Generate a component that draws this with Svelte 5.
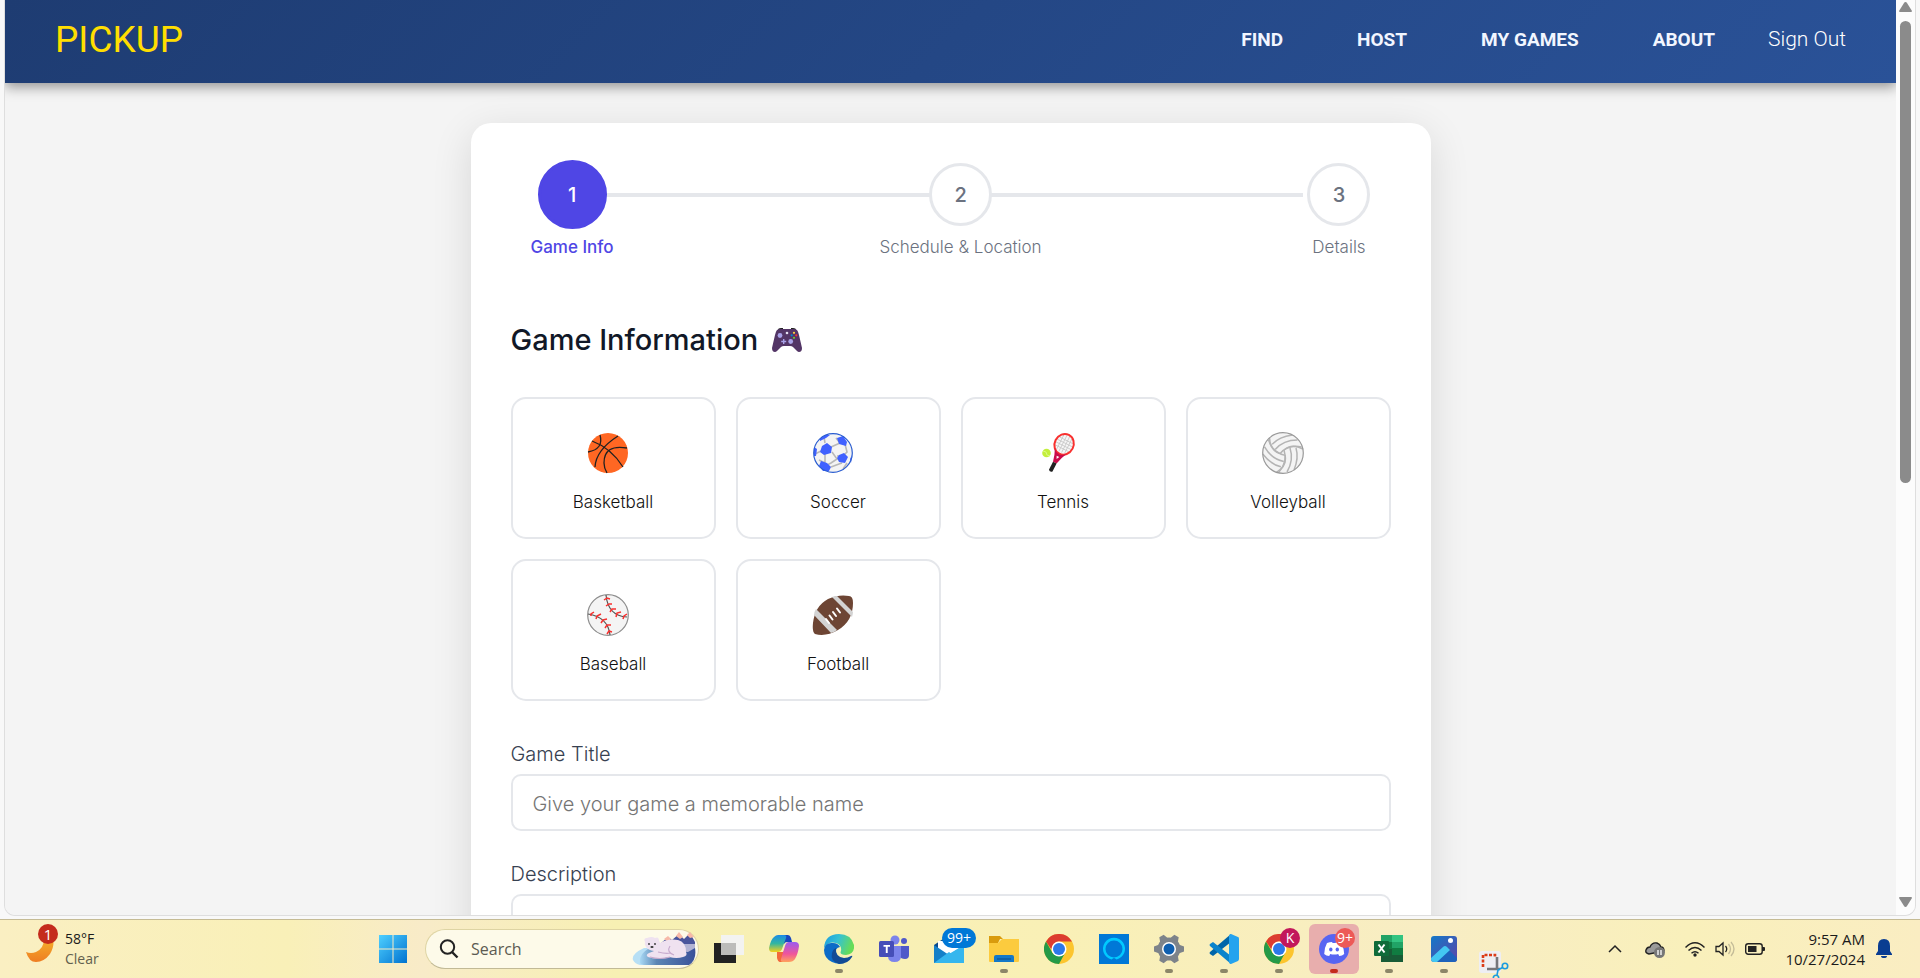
<script>
  const nav = ['FIND', 'HOST', 'MY GAMES', 'ABOUT'];
  const steps = [
    { n: 1, label: 'Game Info', active: true },
    { n: 2, label: 'Schedule & Location', active: false },
    { n: 3, label: 'Details', active: false }
  ];
  const sports = ['Basketball', 'Soccer', 'Tennis', 'Volleyball', 'Baseball', 'Football'];
  const apps = [
    { id: 'taskview', label: 'Task view' },
    { id: 'copilot', label: 'Copilot' },
    { id: 'edge', label: 'Edge', open: true },
    { id: 'teams', label: 'Teams' },
    { id: 'mail', label: 'Mail', badge: '99+' },
    { id: 'files', label: 'File Explorer', open: true },
    { id: 'chrome', label: 'Chrome' },
    { id: 'alexa', label: 'Alexa' },
    { id: 'settings', label: 'Settings', open: true },
    { id: 'code', label: 'Code', open: true },
    { id: 'chrome', label: 'Chrome profile', open: true, badge: 'K' },
    { id: 'discord', label: 'Discord', open: true, badge: '9+' },
    { id: 'excel', label: 'Excel', open: true },
    { id: 'photos', label: 'Photos', open: true },
    { id: 'snip', label: 'Snipping Tool' }
  ];
  let selected = $state('');
  let title = $state('');
</script>

<div class="desktop">
  <div class="window">
    <div class="page">
      <header>
        <a class="logo" href="#home">PICKUP</a>
        <nav>
          {#each nav as item}
            <a href="#{item}">{item}</a>
          {/each}
          <button class="signout">Sign Out</button>
        </nav>
      </header>
      <main>
        <form class="card">
          <ol class="steps">
            {#each steps as s}
              <li class:active={s.active}>
                <span class="circle">{s.n}</span>
                <span class="step-label">{s.label}</span>
              </li>
            {/each}
          </ol>

          <h2>
            Game Information
            <svg class="pad" viewBox="0 0 30 24" aria-hidden="true">
              <path d="M6 2q0-2 3-2h2v3H6zM19 0h2q3 0 3 2v1h-5z" fill="#222" />
              <path d="M5 2Q6 1 9 1h12q3 0 4 1 1 1 2 5l3 13q0 4-3 4-1 0-2-1l-4-4q-1-1-3-1h-6q-2 0-3 1l-4 4q-1 1-2 1-3 0-3-4L3 7q1-4 2-5z" fill="#533566" />
              <circle cx="8" cy="7.5" r="2.4" fill="#a9a2e8" />
              <circle cx="18.7" cy="13.5" r="2.4" fill="#a9a2e8" />
              <path d="M11 11h1.4v1.8h1.8v1.4h-1.8V16H11v-1.8H9.200v-1.400H11z" fill="#a9a2e8" />
              <circle cx="15" cy="5" r="1.300" fill="#e6e1f2" />
              <circle cx="22" cy="4.800" r="1.100" fill="#fcd53f" />
              <circle cx="19.700" cy="7.300" r="1.100" fill="#0084ce" />
              <circle cx="24.300" cy="7.300" r="1.100" fill="#f8312f" />
              <circle cx="22" cy="9.800" r="1.100" fill="#6fc332" />
            </svg>
          </h2>

          <div class="sports">
            {#each sports as sport}
              <button type="button" class:chosen={selected === sport} onclick={() => (selected = sport)}>
                <svg viewBox="-21 -21 42 42" aria-hidden="true">
                  {#if sport === 'Basketball'}
                    <circle r="20" fill="#ff6723" />
                    <g fill="none" stroke="#212121" stroke-width="1.300">
                      <path d="M-16-12Q3-5 15 14M-8-18Q-4-4-20-1M10-17Q-12-3-13 14M19-5Q-4-9-4 10-4 15-1 20" />
                    </g>
                  {:else if sport === 'Soccer'}
                    <circle r="19.300" fill="#f4f4f4" />
                    <g fill="none" stroke="#b8b8b8" stroke-width="1.600">
                      <path d="M-8-10l-1-6M-2-6l9-4 5-1M-12-2l-6 3M-8 1v9l-6-3M-1-1l5 7-6 4-6 3M7 3h-3M7-10l-4-5M12-9l2 8-3 3M-2 14l8-3 3-1M14 10l-4 6" />
                    </g>
                    <g fill="#4061ff">
                      <path d="M-11-7l5-3 5 4-1 6-7 2-4-3zM4-15l6-2 4 6-1 4-7-2zM6 2l5-2 4 4-3 6-6-1-2-4zM-12 8l6 2 4 4-2 4-6 0-4-5zM-13-14l5-4h5l-4 3-6 3zM17 6l2-4-1 8zM-19-6l3 2-1 7-2 0z" />
                    </g>
                    <circle r="19.300" fill="none" stroke="#2a5dd0" stroke-width="1.200" />
                  {:else if sport === 'Tennis'}
                    <g transform="rotate(27)">
                      <ellipse cx="1.500" cy="-11" rx="9" ry="10" fill="#f6f6f6" />
                      <path d="M-3-19v16M0-20V-2M3-20V-2M6-19v16M-6-15H9M-7-12H10M-7-9H10M-6-6H9" stroke="#c8c8c8" stroke-width=".8" fill="none" />
                      <ellipse cx="1.500" cy="-10.500" rx="9.500" ry="10.500" fill="none" stroke="#f8312f" stroke-width="2" />
                      <path d="M-5-3Q-2 3-.5 10h4Q5 3 8-3L6-1Q1.500 2-3-1zM0 3l3 0-1.500 3z" fill="#ca0b4a" fill-rule="evenodd" />
                      <path d="M-.5 10h4v9q-2 2-4 0z" fill="#212121" />
                    </g>
                    <circle cx="-11.500" cy="0" r="4.300" fill="#c3ef3c" />
                    <path d="M-15-2l3 1 1 3 3 1" fill="none" stroke="#dafa82" />
                  {:else if sport === 'Volleyball'}
                    <circle r="20.300" fill="#f4f4f4" />
                    <g fill="none" stroke="#b4b4b4" stroke-width="1.500">
                      {#each [0, 120, 240] as turn}
                        <path transform="rotate({turn})" d="M1-3Q5 9-4 19M7-5Q11 7 4 19M13-5Q16 5 11 17M1-3Q9-10 20-4" />
                      {/each}
                    </g>
                    <circle r="20.300" fill="none" stroke="#999" stroke-width="1.200" />
                  {:else if sport === 'Baseball'}
                    <circle r="20.300" fill="#f4f4f4" stroke="#8d8d8d" stroke-width="1.200" />
                    <path d="M-2-20Q0 1 19 2M-20-1Q0 2 2 20" fill="none" stroke="#555" stroke-width="1.200" />
                    <path d="M-4-15l3-2 3 1M-2-9l3-2 3 0M2-3l2-3 4 0M8 2l1-4 4-1M15 4l1-3 3-2M-17 1l0-2 3-2M-12 4l1-3 4-2M-7 8l2-3 4-1M-3 13l2-3 4 0M-1 19l2-3 3 1" fill="none" stroke="#f8312f" stroke-width="1.500" />
                  {:else}
                    <path d="M-18 19Q-21 17-20 8-18-9-5-16 6-21 16-19q4 0 4 7Q20 6 5 15-7 22-18 19z" fill="#6d4534" />
                    <path d="M-19 0L-2 18q4-1 6-3L-17-6q-2 3-2 6zM-1-18L19 2q1-3 1-5L4-19q-3 0-5 1z" fill="#d3d3d3" />
                    <path d="M-7 4l3 4M-3.500.5l3 4M0-3l3 4M4-6.500l3 4" stroke="#fff" stroke-width="2" stroke-linecap="round" />
                  {/if}
                </svg>
                <span>{sport}</span>
              </button>
            {/each}
          </div>

          <div class="field">
            <label for="title">Game Title</label>
            <input id="title" type="text" placeholder="Give your game a memorable name" bind:value={title} />
          </div>
          <div class="field">
            <label for="desc">Description</label>
            <textarea id="desc" rows="4"></textarea>
          </div>
        </form>
      </main>
    </div>
    <div class="scrollbar" aria-hidden="true">
      <svg viewBox="0 0 13 10"><path d="M6.500 0q1 0 1.500 1l5 8q0 1-1 1H1q-1 0-1-1l5-8q.5-1 1.500-1z" /></svg>
      <div class="track"><div class="thumb"></div></div>
      <svg viewBox="0 0 13 10"><path d="M6.500 10q-1 0-1.500-1L0 1q0-1 1-1h11q1 0 1 1L8 9q-.5 1-1.500 1z" /></svg>
    </div>
  </div>

  <footer>
    <div class="weather">
      <div class="moon">
        <svg viewBox="0 0 28 26">
          <defs><linearGradient id="mn" x2="0" y2="1"><stop stop-color="#f6b42c" /><stop offset="1" stop-color="#ee7d22" /></linearGradient></defs>
          <path d="M27 0q2 10-3 18-6 8-14 8Q3 26 0 16q5 2 10 0Q19 12 18 0z" fill="url(#mn)" />
        </svg>
        <span class="alert">1</span>
      </div>
      <div class="temps"><span>58°F</span><span class="muted">Clear</span></div>
    </div>

    <div class="apps">
      <button class="app" aria-label="Start">
        <svg viewBox="0 0 30 30">
          <defs><linearGradient id="win" x2="1" y2="1"><stop stop-color="#4fd0ff" /><stop offset="1" stop-color="#0072d0" /></linearGradient></defs>
          <path d="M1 1h13.500v13.500H1zM15.500 1H29v13.500H15.500zM1 15.500h13.500V29H1zM15.500 15.500H29V29H15.500z" fill="url(#win)" />
        </svg>
      </button>
      <label class="search">
        <svg class="lens" viewBox="0 0 20 20"><circle cx="8.500" cy="8" r="6.700" fill="none" stroke="#222" stroke-width="2" /><path d="M13 13l5.500 5.500" stroke="#222" stroke-width="2.400" /></svg>
        <input type="text" placeholder="Search" aria-label="Search" />
        <svg class="bear" viewBox="0 0 64 34">
          <defs>
            <linearGradient id="sea" x2="1" y2="0"><stop stop-color="#a8d8f4" /><stop offset=".3" stop-color="#5c86b4" /><stop offset="1" stop-color="#39519a" /></linearGradient>
          </defs>
          <path d="M28 12l8-7 4 3 7-6 5 5 6-6 5 9v11H34z" fill="#4a559c" />
          <path d="M32 7l4-3 3 3-3 3zM44 4l3-4 4 5-3 2zM55 3l3-3 4 5-4 1z" fill="#f7b9a8" />
          <path d="M40 12h23v12H40z" fill="#b2b3d4" />
          <path d="M1 28Q-1 22 12 16l6 0-4 7 8 10H8q-5-1-7-5z" fill="#b7dff5" />
          <path d="M8 31q-1-9 8-14l40 3 7-4q2 12-6 17H14q-5 0-6-2z" fill="url(#sea)" />
          <path d="M13 10q-2-4 2-4 5-2 8 0 4-2 4 3 1 1 1 2 8-5 18-3 8 2 8 12 2 4-3 5-6 2-14 0-12 3-21 0-3-2 1-4l5-2q-6-1-8-4-2-3-1-5z" fill="#efe2f0" />
          <path d="M26 20q8 2 12 1M38 14q-4 6 4 9M18 25q10 3 20 0" fill="none" stroke="#c6aacd" stroke-width="1.200" />
          <circle cx="17" cy="12" r=".9" fill="#333" /><circle cx="23" cy="12" r=".9" fill="#333" /><ellipse cx="20" cy="15" rx="1.600" ry="1.100" fill="#333" />
        </svg>
      </label>

      {#each apps as app}
        <button class="app {app.id}" class:open={app.open} aria-label={app.label}>
          <svg viewBox="0 0 30 30">
            {#if app.id === 'taskview'}
              <path d="M0 9h22v20H0z" fill="#222" />
              <path d="M7 1h23v20H7z" fill="#f3f3f1" />
              <path d="M7 9h15v12H7z" fill="#bcbcba" />
            {:else if app.id === 'copilot'}
              <defs>
                <linearGradient id="cpa" x2="0" y2="1"><stop stop-color="#1b8be8" /><stop offset=".5" stop-color="#33b6a0" /><stop offset="1" stop-color="#f5d01c" /></linearGradient>
                <linearGradient id="cpb" x2="0" y2="1"><stop stop-color="#9a5cf0" /><stop offset=".6" stop-color="#f0559a" /><stop offset="1" stop-color="#ffa25c" /></linearGradient>
              </defs>
              <path d="M9 1h10q2 0 3 3l1 4h-5q-2 0-3 2z" fill="#1848c0" />
              <path d="M9 1h6q3 0 2 3l-4 11q-1 3-4 3H3q-3 0-3-4Q2 5 5 3q2-2 4-2z" fill="url(#cpa)" />
              <path d="M8 18h6l3-3-2 10q-1 3 5 3h-9q-2 0-3-4z" fill="#f2683c" />
              <path d="M20 8h6q4 0 4 4-1 8-4 13-2 3-6 3h-6q-3 0-2-3l4-13q1-4 4-4z" fill="url(#cpb)" />
            {:else if app.id === 'edge'}
              <defs>
                <linearGradient id="eg" x2="1" y2=".3"><stop stop-color="#1a9be0" /><stop offset=".5" stop-color="#35c1d4" /><stop offset="1" stop-color="#66dc58" /></linearGradient>
              </defs>
              <path d="M0 14Q1 0 15 0q12 0 15 11 1 9-8 10-7 0-5-4 1-6-5-8Q5 7 0 14z" fill="url(#eg)" />
              <path d="M0 16Q1 8 9 9q5 0 7 4-5 1-5 7 1 7 9 9-6 2-12-1-8-4-8-12z" fill="#0c6cc8" />
              <path d="M12 14q-1 9 8 10 4 0 7-2 2-1 1 1-4 7-13 7Q6 27 8 19q1-4 4-5z" fill="#124b96" />
            {:else if app.id === 'teams'}
              <circle cx="16" cy="6" r="4.500" fill="#7b83eb" /><circle cx="25" cy="7" r="3" fill="#5059c9" />
              <path d="M20 12h10v9q0 4-4 4t-6-3z" fill="#5059c9" />
              <path d="M9 12h13v10q0 6-6.500 6T9 22z" fill="#7b83eb" />
              <rect y="7" width="15" height="16" rx="1.500" fill="#464eb8" />
              <path d="M4.500 11h6.500v1.800H8.700V19H6.800v-6.200H4.500z" fill="#fff" />
            {:else if app.id === 'mail'}
              <path d="M0 11L15 1l15 10v5H0z" fill="#0b4a8c" /><path d="M4 7h22v13H4z" fill="#fff" />
              <path d="M0 11l15 10 15-10v18H0z" fill="#1580c8" />
              <path d="M0 29l15-11L30 29zM15 20l15-9v18z" fill="#35b6ee" />
            {:else if app.id === 'files'}
              <path d="M0 2h11l3 3h-3l-2 4H0z" fill="#d99b0d" />
              <path d="M0 9h9l4-4h17v22q0 1-1 1H1q-1 0-1-1z" fill="#fccb3e" />
              <path d="M5 28v-5q0-2 2-2h16q2 0 2 2v5z" fill="#1478c8" /><path d="M8 25h14" stroke="#0b4b88" />
            {:else if app.id === 'chrome'}
              <circle cx="15" cy="15" r="15" fill="#fcc52e" />
              <path d="M2 7.500A15 15 0 0 1 28 7.500H15q-6 0-7.500 8z" fill="#dc3c30" />
              <path d="M2 7.500l6.500 11.500q3 4 12.500 0L15 30A15 15 0 0 1 2 7.500z" fill="#249a48" />
              <circle cx="15" cy="15" r="7.500" fill="#fff" /><circle cx="15" cy="15" r="6" fill="#2c78e8" />
            {:else if app.id === 'alexa'}
              <path d="M0 0h30v30H0z" fill="#0078d7" />
              <path d="M12.500 25.500a11 11 0 1 1 5 0Q16 24 15 24t-2.500 1.500z" fill="#00caff" /><circle cx="15" cy="15" r="8.500" fill="#0078d7" />
            {:else if app.id === 'settings'}
              <g fill="#7d838a">
                {#each [0, 60, 120] as turn}
                  <path transform="rotate({turn + 30} 15 15)" d="M11 4l1.500-4h5L19 4v22l-1.500 4h-5L11 26z" />
                {/each}
                <circle cx="15" cy="15" r="11.500" />
              </g>
              <circle cx="15" cy="15" r="7" fill="#fff" /><circle cx="15" cy="15" r="5.500" fill="#0f5fb0" />
            {:else if app.id === 'code'}
              <path d="M22 0v8L4 22l-3-2q-1-1 0-2z" fill="#0065a9" />
              <path d="M22 30v-8L4 8l-3 2q-1 1 0 2z" fill="#0a83cc" />
              <path d="M22 0l7 3q1 0 1 2v20q0 1-1 2l-7 3q-2 0-2-2V2q0-2 2-2z" fill="#25a3ee" />
            {:else if app.id === 'discord'}
              <circle cx="15" cy="15" r="15" fill="#5865f2" />
              <path d="M8 9q3-1 5-1l.6 1h3l.6-1q3 0 5 1 3 6 3 11-2 2-5 2l-1-2q-4 1-8 0l-1 2q-3 0-5-2 0-6 2.800-11z" fill="#fff" />
              <ellipse cx="11.800" cy="15.500" rx="1.700" ry="2" fill="#5865f2" /><ellipse cx="18.300" cy="15.500" rx="1.700" ry="2" fill="#5865f2" />
            {:else if app.id === 'excel'}
              <path d="M7 1h22v27H7z" fill="#185c37" /><path d="M7 1h11v7H7z" fill="#21a366" /><path d="M18 1h11v7H18z" fill="#33c481" />
              <path d="M7 8h11v7H7z" fill="#107c41" /><path d="M18 8h11v6H18z" fill="#21a366" /><path d="M18 14h11v7H18z" fill="#107c41" />
              <rect y="7" width="15" height="15" rx="1" fill="#0f6b3a" />
              <path d="M4.500 10.500l6 8M10.500 10.500l-6 8" stroke="#fff" stroke-width="2" />
            {:else if app.id === 'photos'}
              <defs><linearGradient id="ph" x2="1" y2="1"><stop stop-color="#1378c8" /><stop offset="1" stop-color="#5d45a8" /></linearGradient></defs>
              <path d="M5 2h20q3 0 3 3v20q0 3-3 3H5q-3 0-3-3V5q0-3 3-3z" fill="url(#ph)" />
              <path d="M12 16l2-2q2-2 4 0l10 10v1q0 3-3 3H8z" fill="#1d62bc" />
              <path d="M2 24l12-11q2-2 4 0l3 3L8 28H5q-3 0-3-3z" fill="#43c7f2" />
              <circle cx="21.500" cy="6.500" r="2.500" fill="#fff" />
            {:else}
              <path d="M3 0h16q3 0 3 3v16q0 3-3 3H3q-3 0-3-3V3q0-3 3-3z" fill="#eeeef3" />
              <path d="M4 16V4h12v3" fill="none" stroke="#dc3c18" stroke-width="2.600" stroke-dasharray="3 1.500" />
              <path d="M18 6v13M8 18h13" stroke="#76767a" stroke-width="2.600" />
              <circle cx="26" cy="15" r="2.700" fill="none" stroke="#1b9be0" stroke-width="1.600" /><circle cx="17" cy="27" r="2.700" fill="none" stroke="#1b9be0" stroke-width="1.600" />
              <path d="M23.500 16.500L19 19l-1 5" fill="none" stroke="#1b9be0" stroke-width="1.600" />
            {/if}
          </svg>
          {#if app.badge}<span class="badge" class:wide={app.badge === '99+'} class:profile={app.badge === 'K'}>{app.badge}</span>{/if}
        </button>
      {/each}
    </div>

    <div class="tray">
      <svg class="chev" viewBox="0 0 14 20"><path d="M1 13l6-6 6 6" fill="none" stroke="#222" stroke-width="1.500" /></svg>
      <svg viewBox="0 0 20 20">
        <path d="M4 15q-4-1-3-4 1-3 4-3 2-5 7-4 3 1 4 4 3 0 3 4z" fill="#9a9a9a" stroke="#222" stroke-width="1.400" />
        <circle cx="14.500" cy="13.500" r="5.500" fill="#777" /><path d="M13 11v5M16 11v5" stroke="#fff" stroke-width="1.300" />
      </svg>
      <svg class="wifi" viewBox="0 0 20 20"><path d="M0.500 8.500Q10-1 19.500 8.500M3.500 11.500q6.500-6 13 0M6.500 14.300q3.500-3 7 0" fill="none" stroke="#222" stroke-width="1.500" /><circle cx="10" cy="16" r="1.700" fill="#222" /></svg>
      <svg viewBox="0 0 20 20"><path d="M1 7.500h3L8 4v12l-4-3.500H1z" fill="none" stroke="#222" stroke-width="1.300" /><path d="M10.500 7q2.500 3 0 6" fill="none" stroke="#222" stroke-width="1.300" /><path d="M13.500 5q4 5 0 10M16 3q6 7 0 14" fill="none" stroke="#c4bc98" stroke-width="1.300" /></svg>
      <svg viewBox="0 0 20 20"><rect x=".7" y="4.700" width="16.500" height="10.600" rx="2.500" fill="none" stroke="#222" stroke-width="1.400" /><rect x="3" y="7" width="8.500" height="6" fill="#222" /><path d="M17 8h2q1 0 1 1v2q0 1-1 1h-2z" fill="#222" /></svg>
      <div class="clock"><span>9:57 AM</span><span>10/27/2024</span></div>
      <svg class="bell" viewBox="0 0 16 20"><path d="M8 0q6 0 6 7v5l2 3v1H0v-1l2-3V7q0-7 6-7zM5 17h6q0 2-3 2t-3-2z" fill="#0a3d91" /></svg>
    </div>
  </footer>
</div>

<style>
  * { box-sizing: border-box; }
  :global(body) { margin: 0; }
  button { font: inherit; border: 0; background: none; padding: 0; cursor: pointer; }
  a { text-decoration: none; color: inherit; }
  svg { display: block; }

  .desktop { height: 100vh; display: flex; flex-direction: column; background: #f8f8f8; font-family: Inter, "Liberation Sans", sans-serif; overflow: hidden; }
  .window { flex: 1; min-height: 0; display: flex; margin: 0 4px 3px; border: 1px solid #dedede; border-top: 0; border-radius: 0 0 11px 11px; overflow: hidden; }
  .page { flex: 1; min-width: 0; overflow: hidden; background: #f4f4f4; }

  header { position: relative; display: flex; align-items: center; justify-content: space-between; height: 83px; padding: 0 50px 5px; background: linear-gradient(135deg, #1e3c72, #2a5298); box-shadow: 0 4px 12px rgba(0, 0, 0, .4); }
  .logo { font-family: Roboto, sans-serif; font-size: 37px; font-weight: 400; color: #ffde00; }
  nav { display: flex; align-items: center; font-family: Roboto, sans-serif; color: #fff; font-size: 19px; font-weight: 700; }
  nav a { margin-right: 74px; color: #f2f6ff; }
  nav a:last-of-type { margin-right: 53px; }
  .signout { font-size: 21px; font-weight: 300; color: #fff; }

  main { padding: 40px 20px; }
  .card { max-width: 960px; margin: 0 auto; padding: 40px; background: #fff; border-radius: 20px; box-shadow: 0 10px 40px rgba(0, 0, 0, .12); }

  .steps { position: relative; list-style: none; margin: 0 0 66px; padding: 0 20px; display: flex; justify-content: space-between; }
  .steps::before { content: ""; position: absolute; left: 60px; right: 88px; top: 30px; height: 4px; background: #e5e7eb; }
  li { position: relative; display: flex; flex-direction: column; align-items: center; gap: 11px; min-width: 63px; }
  .circle { display: grid; place-items: center; width: 63px; height: 63px; border: 3px solid #e5e7eb; border-radius: 50%; background: #fff; color: #6b7280; font-size: 20px; font-weight: 500; }
  .active .circle { width: 69px; height: 69px; margin: -3px 0; border-color: #4f46e5; background: #4f46e5; color: #fff; }
  .step-label { font-size: 17px; line-height: 20px; font-weight: 300; color: #6b7280; white-space: nowrap; }
  .active .step-label { color: #4f46e5; font-weight: 500; }

  h2 { display: flex; align-items: center; gap: 14px; margin: 0 0 40px; font-size: 29px; line-height: 34px; font-weight: 500; color: #111827; }
  .pad { width: 30px; height: 24px; }

  .sports { display: grid; grid-template-columns: repeat(4, 1fr); gap: 20px; margin-bottom: 41px; }
  .sports button { display: flex; flex-direction: column; align-items: center; gap: 16px; padding: 33px 0 23px; border: 2px solid #e5e7eb; border-radius: 15px; background: #fff; font-size: 17px; line-height: 24px; font-weight: 300; color: #111; }
  .sports button.chosen { border-color: #4f46e5; }
  .sports svg { width: 42px; height: 42px; margin-right: 11px; }

  .field { display: flex; flex-direction: column; gap: 8px; margin-bottom: 31px; }
  .field label { font-size: 20px; line-height: 24px; font-weight: 300; color: #374151; }
  .field input, .field textarea { width: 100%; padding: 16px 20px 14px; border: 2px solid #e5e7eb; border-radius: 10px; background: #fff; font: inherit; font-size: 20px; line-height: 23px; font-weight: 300; color: #111827; resize: none; }
  .field input { height: 57px; }
  .field input::placeholder { color: #757575; }

  .scrollbar { flex: none; display: flex; flex-direction: column; align-items: center; width: 19px; padding: 2px 3px 8px; background: #fcfcfc; }
  .scrollbar svg { width: 13px; height: 10px; fill: #8b8b8b; }
  .track { flex: 1; width: 11px; padding: 9px 0 5px; }
  .thumb { height: 53%; border-radius: 6px; background: #8b8b8b; }

  footer { flex: none; display: grid; grid-template-columns: 1fr auto 1fr; align-items: center; height: 59px; padding-right: 28px; border-top: 1px solid #c5bb94; background: linear-gradient(90deg, #faefc2, #f9f0b8 15%, #f8ebc8 22%, #f7f0b3 32%, #f9f0b6 55%, #f8edc4 75%, #f9f0bb 88%, #faedc2); font-family: "Open Sans", sans-serif; font-size: 15px; line-height: 20px; color: #1b1b1b; }
  .weather { display: flex; align-items: center; padding-left: 26px; gap: 11px; }
  .moon { position: relative; width: 28px; }
  .moon svg { width: 28px; height: 26px; }
  .alert { position: absolute; right: -4px; top: -12px; width: 20px; height: 20px; border-radius: 50%; background: #c42b1c; color: #fff; text-align: center; }
  .temps, .clock { display: flex; flex-direction: column; }
  .temps { font-size: 14px; }
  .muted { color: #62604e; }
  .apps { display: flex; align-items: center; }
  .app { position: relative; display: grid; place-items: center; width: 50px; height: 50px; margin-right: 5px; border-radius: 6px; }
  .app:first-child { width: 30px; margin-right: 17px; }
  .app:last-child { width: 40px; margin-right: 0; padding-top: 27px; align-items: start; }
  .app svg { width: 30px; height: 30px; }
  .app.discord { background: #e8aead; }
  .open::after { content: ""; position: absolute; left: 21px; bottom: 1px; width: 8px; height: 4px; border-radius: 2px; background: #8c8668; }
  .discord::after { background: #c42b1c; }
  .badge { position: absolute; left: 26px; top: 4px; width: 20px; height: 20px; border-radius: 10px; background: #ed5a57; color: #fff; font-size: 14px; line-height: 20px; text-align: center; }
  .badge.wide { left: 18px; width: 34px; background: #0078d7; }
  .badge.profile { background: #c2185b; }
  .search { display: flex; align-items: center; width: 274px; height: 40px; margin-right: 5px; padding: 0 2px 0 13px; border: 1px solid #ded4a3; border-bottom-color: #c2ba96; border-radius: 20px; background: #fdfae9; }
  .lens { width: 20px; height: 20px; flex: none; }
  .search input { flex: 1; min-width: 0; margin-left: 12px; padding: 0; border: 0; background: none; font: inherit; font-size: 16px; outline: 0; }
  .search input::placeholder { color: #5c5b52; opacity: 1; }
  .bear { width: 64px; height: 34px; }
  .tray { display: flex; align-items: center; justify-content: flex-end; }
  .tray svg { width: 20px; height: 20px; margin-right: 10px; }
  .tray .chev { width: 14px; margin-right: 23px; }
  .tray svg:nth-child(2) { margin-right: 20px; }
  .clock { margin-left: 10px; text-align: right; }
  .tray .bell { width: 16px; margin: 0 0 0 11px; }
</style>
